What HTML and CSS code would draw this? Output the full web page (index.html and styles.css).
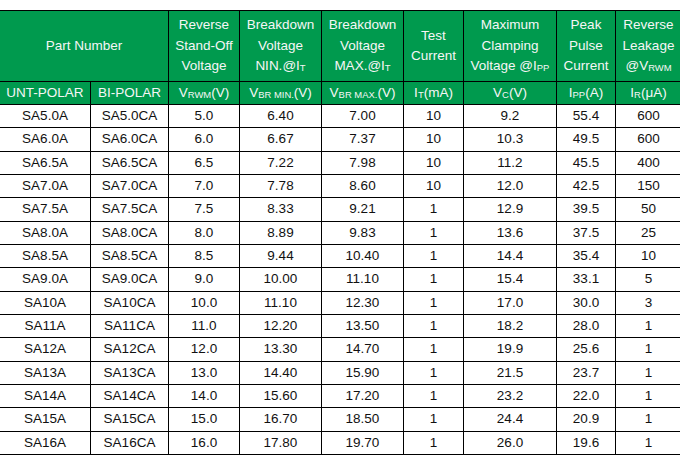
FILE: index.html
```html
<!DOCTYPE html>
<html lang="en">
<head>
<meta charset="utf-8">
<title>TVS Diode Parameters</title>
<link rel="stylesheet" href="styles.css">
</head>
<body>
<table class="spec">
  <colgroup>
    <col class="c1"><col class="c2"><col class="c3"><col class="c4"><col class="c5"><col class="c6"><col class="c7"><col class="c8"><col class="c9">
  </colgroup>
  <thead>
    <tr class="head-main">
      <th colspan="2">Part Number</th>
      <th>Reverse<br>Stand-Off<br>Voltage</th>
      <th>Breakdown<br>Voltage<br>NIN.@I<sub>T</sub></th>
      <th>Breakdown<br>Voltage<br>MAX.@I<sub>T</sub></th>
      <th>Test<br>Current</th>
      <th>Maximum<br>Clamping<br>Voltage @I<sub>PP</sub></th>
      <th>Peak<br>Pulse<br>Current</th>
      <th>Reverse<br>Leakage<br>@V<sub>RWM</sub></th>
    </tr>
    <tr class="head-units">
      <th>UNT-POLAR</th>
      <th>BI-POLAR</th>
      <th>V<sub>RWM</sub>(V)</th>
      <th>V<sub>BR MIN.</sub>(V)</th>
      <th>V<sub>BR MAX.</sub>(V)</th>
      <th>I<sub>T</sub>(mA)</th>
      <th>V<sub>C</sub>(V)</th>
      <th>I<sub>PP</sub>(A)</th>
      <th>I<sub>R</sub>(μA)</th>
    </tr>
  </thead>
  <tbody>
    <tr><td>SA5.0A</td><td>SA5.0CA</td><td>5.0</td><td>6.40</td><td>7.00</td><td>10</td><td>9.2</td><td>55.4</td><td>600</td></tr>
    <tr><td>SA6.0A</td><td>SA6.0CA</td><td>6.0</td><td>6.67</td><td>7.37</td><td>10</td><td>10.3</td><td>49.5</td><td>600</td></tr>
    <tr><td>SA6.5A</td><td>SA6.5CA</td><td>6.5</td><td>7.22</td><td>7.98</td><td>10</td><td>11.2</td><td>45.5</td><td>400</td></tr>
    <tr><td>SA7.0A</td><td>SA7.0CA</td><td>7.0</td><td>7.78</td><td>8.60</td><td>10</td><td>12.0</td><td>42.5</td><td>150</td></tr>
    <tr><td>SA7.5A</td><td>SA7.5CA</td><td>7.5</td><td>8.33</td><td>9.21</td><td>1</td><td>12.9</td><td>39.5</td><td>50</td></tr>
    <tr><td>SA8.0A</td><td>SA8.0CA</td><td>8.0</td><td>8.89</td><td>9.83</td><td>1</td><td>13.6</td><td>37.5</td><td>25</td></tr>
    <tr><td>SA8.5A</td><td>SA8.5CA</td><td>8.5</td><td>9.44</td><td>10.40</td><td>1</td><td>14.4</td><td>35.4</td><td>10</td></tr>
    <tr><td>SA9.0A</td><td>SA9.0CA</td><td>9.0</td><td>10.00</td><td>11.10</td><td>1</td><td>15.4</td><td>33.1</td><td>5</td></tr>
    <tr><td>SA10A</td><td>SA10CA</td><td>10.0</td><td>11.10</td><td>12.30</td><td>1</td><td>17.0</td><td>30.0</td><td>3</td></tr>
    <tr><td>SA11A</td><td>SA11CA</td><td>11.0</td><td>12.20</td><td>13.50</td><td>1</td><td>18.2</td><td>28.0</td><td>1</td></tr>
    <tr><td>SA12A</td><td>SA12CA</td><td>12.0</td><td>13.30</td><td>14.70</td><td>1</td><td>19.9</td><td>25.6</td><td>1</td></tr>
    <tr><td>SA13A</td><td>SA13CA</td><td>13.0</td><td>14.40</td><td>15.90</td><td>1</td><td>21.5</td><td>23.7</td><td>1</td></tr>
    <tr><td>SA14A</td><td>SA14CA</td><td>14.0</td><td>15.60</td><td>17.20</td><td>1</td><td>23.2</td><td>22.0</td><td>1</td></tr>
    <tr><td>SA15A</td><td>SA15CA</td><td>15.0</td><td>16.70</td><td>18.50</td><td>1</td><td>24.4</td><td>20.9</td><td>1</td></tr>
    <tr><td>SA16A</td><td>SA16CA</td><td>16.0</td><td>17.80</td><td>19.70</td><td>1</td><td>26.0</td><td>19.6</td><td>1</td></tr>
  </tbody>
</table>
</body>
</html>
```
FILE: styles.css
```css
html, body {
  margin: 0;
  padding: 0;
  overflow: hidden;
  background: #ffffff;
}

.spec {
  margin: 10px 0 0 -1px;
  border-collapse: collapse;
  table-layout: fixed;
  width: 682px;
  font-family: "Liberation Sans", Arial, sans-serif;
  font-size: 13.5px;
  color: #111111;
}

.c1 { width: 91px; }
.c2 { width: 78px; }
.c3 { width: 71px; }
.c4 { width: 82px; }
.c5 { width: 82px; }
.c6 { width: 60px; }
.c7 { width: 93px; }
.c8 { width: 59px; }
.c9 { width: 66px; }

.spec th,
.spec td {
  border: 1px solid #000000;
  padding: 0;
  text-align: center;
  vertical-align: middle;
  white-space: nowrap;
}

.spec th {
  background: #009a4e;
  color: #f6f6f6;
  font-weight: normal;
}

.head-main th {
  height: 70px;
  line-height: 20.5px;
}

.head-units th {
  height: 22px;
  line-height: 22px;
}

.spec td {
  height: 22.33px;
  line-height: 20px;
}

.spec sub {
  font-size: 0.7em;
  vertical-align: -0.15em;
  line-height: 0;
}
```
